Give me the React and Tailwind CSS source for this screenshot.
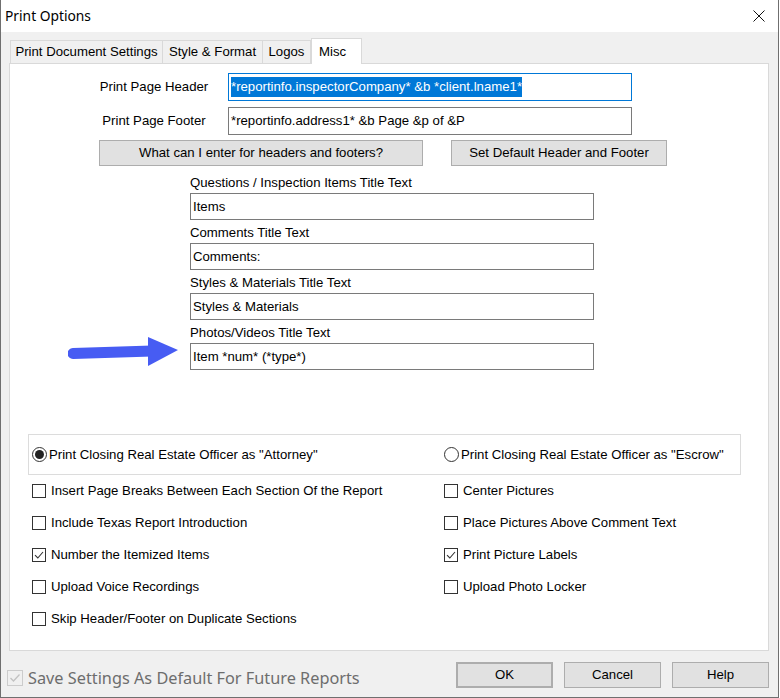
import React from "react";

const font = { fontFamily: '"Liberation Sans", Arial, sans-serif' };

// Windows-style checkbox
const Check = ({ checked, label }) => (
  <div className="flex h-[16px] items-center">
    <div className="flex h-[14px] w-[14px] items-center justify-center border border-[#333] bg-white">
      {checked && (
        <svg width="10" height="10" viewBox="0 0 10 10">
          <path d="M1 5.2 L3.8 8 L9 2" fill="none" stroke="#333" strokeWidth="1.1" />
        </svg>
      )}
    </div>
    <span className="ml-[5px] text-[13.2px] leading-none text-black">{label}</span>
  </div>
);

const Radio = ({ checked, label }) => (
  <div className="flex items-center">
    <div className="flex h-[15px] w-[15px] items-center justify-center rounded-full border border-[#333] bg-white">
      {checked && <div className="h-[9px] w-[9px] rounded-full bg-[#222]" />}
    </div>
    <span className="ml-[2px] text-[13.2px] leading-none text-black">{label}</span>
  </div>
);

const Btn = ({ children, className = "" }) => (
  <div
    className={
      "flex items-center justify-center border border-[#adadad] bg-[#e1e1e1] text-[13.2px] text-black " +
      className
    }
  >
    {children}
  </div>
);

const TitleField = ({ label, value }) => (
  <div className="flex flex-col">
    <div className="h-[20px] text-[13.2px] leading-[20px] text-black">{label}</div>
    <div className="flex h-[27px] w-[404px] items-center border border-[#7a7a7a] bg-white pl-[2px] text-[13.2px] text-black">
      {value}
    </div>
  </div>
);

export default function App() {
  return (
    <div style={font} className="h-[698px] w-[780px] bg-white">
      <div className="flex h-[698px] w-[779px] flex-col border border-t-0 border-[#6f6f6f] bg-[#f0f0f0]">
        {/* Title bar */}
        <div className="flex h-[32px] items-center justify-between bg-white pl-[4px] pr-[13px]">
          <span
            className="mt-[1px] text-[13.8px] text-black"
            style={{ fontFamily: '"Noto Sans", "Liberation Sans", sans-serif' }}
          >
            Print Options
          </span>
          <svg width="12" height="12" viewBox="0 0 12 12">
            <path d="M0.5 0.5 L11.5 11.5 M11.5 0.5 L0.5 11.5" stroke="#111" strokeWidth="1" />
          </svg>
        </div>

        {/* Tabs */}
        <div className="ml-[9px] mt-[7px] flex h-[24px] items-end text-[13.2px] text-black">
          <div className="flex h-[23px] w-[153px] items-center justify-center border border-b-0 border-[#d9d9d9] bg-[#f0f0f0]">
            Print Document Settings
          </div>
          <div className="flex h-[23px] w-[100px] items-center justify-center border border-b-0 border-l-0 border-[#d9d9d9] bg-[#f0f0f0]">
            Style &amp; Format
          </div>
          <div className="flex h-[23px] w-[48px] items-center justify-center border border-b-0 border-l-0 border-[#d9d9d9] bg-[#f0f0f0]">
            Logos
          </div>
          <div className="relative z-10 -mb-px flex h-[26px] w-[51px] items-start border border-b-0 border-[#d9d9d9] bg-white pl-[7px] pt-[3px]">
            Misc
          </div>
        </div>

        {/* Panel */}
        <div className="relative ml-[8px] flex h-[588px] w-[760px] flex-col border border-[#d9d9d9] bg-white">
          {/* header/footer */}
          <div className="mt-[9px] flex items-center">
            <div className="w-[218px] pl-[70px] text-center text-[13.2px]">Print Page Header</div>
            <div className="flex h-[28px] w-[404px] items-center border border-[#0078d7] bg-white pl-[2px] text-[13.2px]">
              <span className="bg-[#0078d7] text-white">*reportinfo.inspectorCompany* &amp;b *client.lname1*</span>
            </div>
          </div>
          <div className="mt-[6px] flex items-center">
            <div className="w-[218px] pl-[70px] text-center text-[13.2px]">Print Page Footer</div>
            <div className="flex h-[28px] w-[404px] items-center border border-[#7a7a7a] bg-white pl-[2px] text-[13.2px]">
              *reportinfo.address1* &amp;b Page &amp;p of &amp;P
            </div>
          </div>
          <div className="mt-[5px] flex">
            <Btn className="ml-[89px] h-[26px] w-[324px]">What can I enter for headers and footers?</Btn>
            <Btn className="ml-[28px] h-[26px] w-[216px]">Set Default Header and Footer</Btn>
          </div>

          {/* title texts */}
          <div className="ml-[180px] mt-[7px] flex flex-col gap-[3px]">
            <TitleField label="Questions / Inspection Items Title Text" value="Items" />
            <TitleField label="Comments Title Text" value="Comments:" />
            <TitleField label="Styles & Materials Title Text" value="Styles & Materials" />
            <TitleField label="Photos/Videos Title Text" value="Item *num* (*type*)" />
          </div>

          {/* annotation arrow */}
          <svg
            className="absolute left-[58px] top-[270px]"
            width="115"
            height="36"
            viewBox="0 0 115 36"
          >
            <path d="M5 19.5 L84 17" stroke="#475cf3" strokeWidth="11" strokeLinecap="round" />
            <path d="M80 3 L110 16 L80 32 Z" fill="#475cf3" />
          </svg>

          {/* radio group */}
          <div className="ml-[18px] mt-[64px] flex h-[41px] w-[713px] items-center border border-[#dcdcdc] pl-[3px]">
            <div className="w-[412px]">
              <Radio checked label='Print Closing Real Estate Officer as "Attorney"' />
            </div>
            <Radio label='Print Closing Real Estate Officer as "Escrow"' />
          </div>

          {/* checkboxes */}
          <div className="ml-[22px] mt-[8px] grid w-[700px] grid-cols-[412px_1fr] gap-y-[16px]">
            <Check label="Insert Page Breaks Between Each Section Of the Report" />
            <Check label="Center Pictures" />
            <Check label="Include Texas Report Introduction" />
            <Check label="Place Pictures Above Comment Text" />
            <Check checked label="Number the Itemized Items" />
            <Check checked label="Print Picture Labels" />
            <Check label="Upload Voice Recordings" />
            <Check label="Upload Photo Locker" />
            <Check label="Skip Header/Footer on Duplicate Sections" />
          </div>
        </div>

        {/* footer */}
        <div className="mt-[11px] flex items-start">
          <div className="ml-[6px] mt-[8px] flex h-[16px] w-[16px] items-center justify-center border border-[#cccccc] bg-[#f0f0f0]">
            <svg width="12" height="12" viewBox="0 0 12 12">
              <path d="M1.5 6 L4.5 9 L10.5 2.5" fill="none" stroke="#c2c2c2" strokeWidth="1.3" />
            </svg>
          </div>
          <span
            className="ml-[5px] mt-[5px] h-[22px] text-[16.3px] leading-[22px] text-[#6d6d6d]"
            style={{ fontFamily: '"Noto Sans", "Liberation Sans", sans-serif' }}
          >
            Save Settings As Default For Future Reports
          </span>
          <div className="ml-auto mr-[9px] flex gap-[11px]">
            <Btn className="h-[26px] w-[97px] border-2 border-[#0078d7]">OK</Btn>
            <Btn className="h-[26px] w-[97px]">Cancel</Btn>
            <Btn className="h-[26px] w-[97px]">Help</Btn>
          </div>
        </div>
      </div>
    </div>
  );
}
